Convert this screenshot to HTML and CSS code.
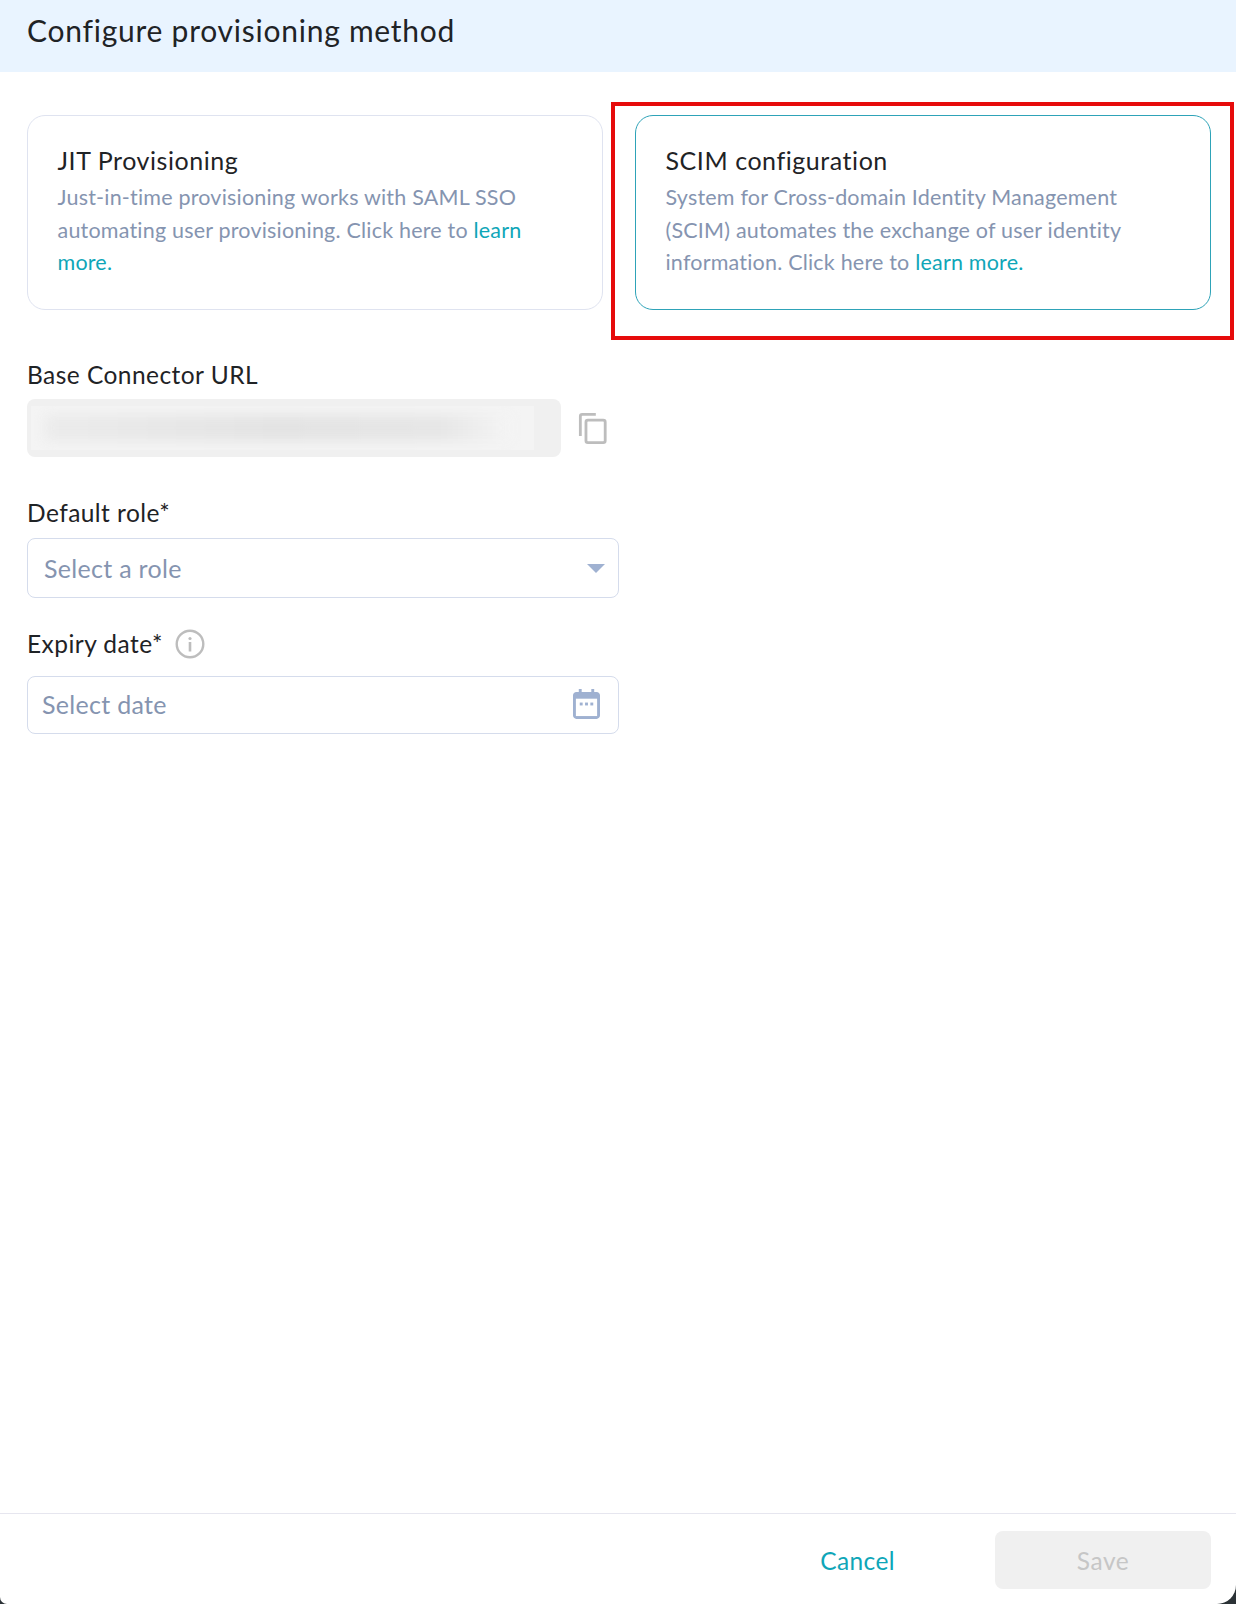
FILE: index.html
```html
<!DOCTYPE html>
<html>
<head>
    <title>Configure provisioning method</title>
    <link rel="stylesheet" href="styles.css">
</head>
<body>
<div class="frame">
<div class="modal">
    <div class="header">
        <h1>Configure provisioning method</h1>
    </div>
    <div class="content">
        <div class="cards">
            <div class="card">
                <h2>JIT Provisioning</h2>
                <p>Just-in-time provisioning works with SAML SSO automating user provisioning. Click here to <a href="#">learn more.</a></p>
            </div>
            <div class="card selected">
                <h2>SCIM configuration</h2>
                <p>System for Cross-domain Identity Management (SCIM) automates the exchange of user identity information. Click here to <a href="#">learn more.</a></p>
                <div class="highlight"></div>
            </div>
        </div>

        <div class="field field-url">
            <label>Base Connector URL</label>
            <div class="url-row">
                <div class="url-box">
                    <div class="url-mask"><div class="url-blur"></div></div>
                </div>
                <svg class="copy-icon" width="30" height="35" viewBox="0 0 32 36" fill="none" stroke="#bdbdbd" stroke-width="3">
                    <path d="M19 3H4.500C3.400 3 2.500 3.900 2.500 5V26"/>
                    <rect x="8.500" y="9" width="20.500" height="24" rx="2"/>
                </svg>
            </div>
        </div>

        <div class="field field-role">
            <label>Default role*</label>
            <div class="input select-input">
                <span>Select a role</span>
                <span class="arrow"></span>
            </div>
        </div>

        <div class="field field-date">
            <label>Expiry date*
                <svg class="info-icon" width="30" height="30" viewBox="0 0 30 30" fill="none">
                    <circle cx="15" cy="15" r="13.300" stroke="#bdbdbd" stroke-width="2.400"/>
                    <circle cx="15" cy="9.500" r="1.600" fill="#bdbdbd"/>
                    <rect x="13.700" y="13" width="2.600" height="9.500" fill="#bdbdbd"/>
                </svg>
            </label>
            <div class="input date-input">
                <span>Select date</span>
                <svg class="calendar-icon" width="27" height="30" viewBox="0 0 28 31">
                    <path fill="#9fb1d1" d="M6 0h3v3h10V0h3v3h2.500C26.400 3 28 4.600 28 6.500V27.500C28 29.400 26.400 31 24.500 31H3.500C1.600 31 0 29.400 0 27.500V6.500C0 4.600 1.600 3 3.500 3H6z"/>
                    <rect x="3" y="10" width="22" height="18" fill="#fff"/>
                    <rect x="7" y="14" width="3" height="3" fill="#9fb1d1"/>
                    <rect x="12.500" y="14" width="3" height="3" fill="#9fb1d1"/>
                    <rect x="18" y="14" width="3" height="3" fill="#9fb1d1"/>
                </svg>
            </div>
        </div>
    </div>
    <div class="footer">
        <a class="cancel" href="#">Cancel</a>
        <button class="save" disabled>Save</button>
    </div>
</div>
</div>
</body>
</html>
```

FILE: styles.css
```css
html, body {
    height: 100%;
    margin: 0;
    background-color: #fff;
}

body {
    font-family: "Lato", "Open Sans", sans-serif;
    color: #1f2326;
}

.frame {
    width: 1236px;
    height: 1604px;
    background-color: #2b3236;
}

.modal {
    display: flex;
    flex-direction: column;
    height: 100%;
    background-color: #fff;
    border-radius: 0 0 19px 7px;
    overflow: hidden;
}

.header {
    height: 72px;
    flex-shrink: 0;
    display: flex;
    align-items: center;
    padding: 0 27px 12px;
    box-sizing: border-box;
    background-color: #e9f4ff;
}

h1 {
    margin: 0;
    font-size: 30px;
    font-weight: 400;
    letter-spacing: 0.75px;
}

.content {
    flex: 1;
    padding: 43px 25px 0 27px;
}

.cards {
    display: flex;
    gap: 32px;
}

.card {
    flex: 1;
    position: relative;
    height: 195px;
    padding: 29px 28px 0 29.500px;
    box-sizing: border-box;
    border: 1px solid #dfe3f0;
    border-radius: 18px;
}

.card.selected {
    border-color: #2ea3b8;
}

.card h2 {
    margin: 0 0 6px;
    font-size: 25px;
    line-height: 30px;
    font-weight: 400;
    letter-spacing: 0.55px;
}

.card p {
    margin: 0;
    max-width: 472px;
    font-size: 21.500px;
    line-height: 32.500px;
    letter-spacing: 0.2px;
    color: #8594b0;
}

.card a {
    color: #0fa6b8;
    text-decoration: none;
}

/* red annotation box on the screenshot */
.highlight {
    position: absolute;
    left: -25px;
    right: -24px;
    top: -14px;
    bottom: -31px;
    border: 4px solid #e60b0b;
}

.field label {
    display: flex;
    align-items: center;
    gap: 12px;
    font-size: 24.500px;
    line-height: 30px;
    letter-spacing: 0.45px;
}

.field-url {
    margin-top: 50px;
}

.field-role {
    margin-top: 41px;
}

.field-date {
    margin-top: 31px;
}

.url-row {
    display: flex;
    align-items: center;
    gap: 17px;
    margin-top: 9px;
}

.url-box {
    width: 534px;
    height: 58px;
    padding: 7px 27px 7px 4px;
    box-sizing: border-box;
    background-color: #f0f0f0;
    border-radius: 8px;
}

.url-mask {
    height: 44px;
    overflow: hidden;
    background-color: #f4f4f4;
}

.url-blur {
    height: 26px;
    margin: 9px 24px 0 14px;
    background: linear-gradient(90deg, #ebebeb, #e3e3e3 50%, #e6e6e6 85%, #f4f4f4);
    filter: blur(6px);
}

.input {
    display: flex;
    align-items: center;
    justify-content: space-between;
    width: 592px;
    margin-top: 10px;
    box-sizing: border-box;
    background-color: #fff;
    border: 1px solid #d5dcec;
    border-radius: 8px;
    font-size: 25px;
    letter-spacing: 0.3px;
    color: #8594b0;
}

.select-input {
    height: 60px;
    padding: 0 13px 0 16px;
}

.date-input {
    height: 58px;
    margin-top: 17px;
    padding: 0 18px 2px 14px;
}

.arrow {
    width: 0;
    height: 0;
    border-left: 9px solid transparent;
    border-right: 9px solid transparent;
    border-top: 9px solid #9fb1d1;
}

.footer {
    height: 91px;
    flex-shrink: 0;
    display: flex;
    align-items: center;
    justify-content: flex-end;
    gap: 100px;
    padding: 2px 25px 0 0;
    box-sizing: border-box;
    border-top: 1px solid #e6e6ef;
}

.cancel {
    font-size: 24.500px;
    letter-spacing: 0.4px;
    color: #0fa6b8;
    text-decoration: none;
}

.save {
    width: 216px;
    height: 58px;
    background-color: #f0f0f0;
    border: none;
    border-radius: 8px;
    font-family: inherit;
    font-size: 24.500px;
    letter-spacing: 0.5px;
    color: #c6c6c6;
}
```
